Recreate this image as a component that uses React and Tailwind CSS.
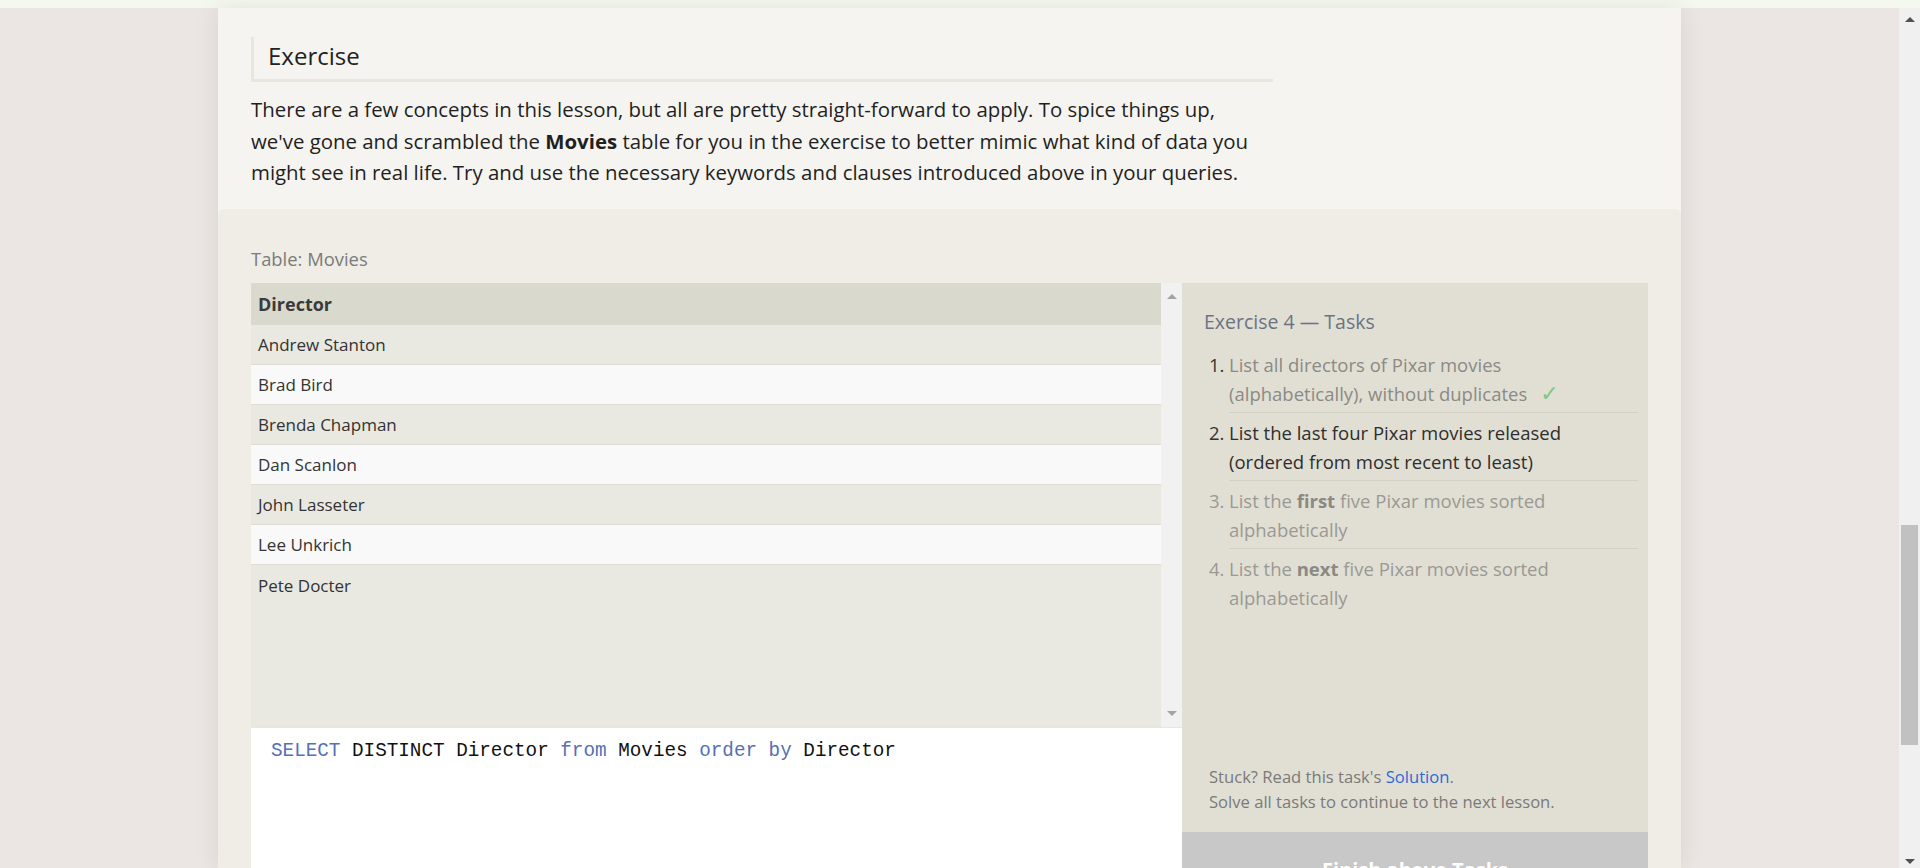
import React from 'react';

const directors = [
  'Andrew Stanton',
  'Brad Bird',
  'Brenda Chapman',
  'Dan Scanlon',
  'John Lasseter',
  'Lee Unkrich',
  'Pete Docter',
];

const UpArrow = ({ color }) => (
  <div className={`w-0 h-0 border-l-[5px] border-r-[5px] border-b-[5px] border-l-transparent border-r-transparent ${color}`} />
);

const DownArrow = ({ color }) => (
  <div className={`w-0 h-0 border-l-[5px] border-r-[5px] border-t-[5px] border-l-transparent border-r-transparent ${color}`} />
);

const TaskList = () => (
  <ol className="mt-[15px] pl-[27px] pr-[10px] text-[18.5px] leading-[28.5px] whitespace-nowrap">
    <li className="flex">
      <span className="w-[20px] shrink-0 text-[#333]">1.</span>
      <div className="flex-1 pb-[4px] border-b border-[#d3d1c6] text-[#8b8a84]">
        List all directors of Pixar movies
        <br />
        (alphabetically), without duplicates
        <span className="ml-[13px] text-[#7fc583] font-['DejaVu_Sans',sans-serif] text-[22px] leading-[20px]">✓</span>
      </div>
    </li>
    <li className="flex mt-[6px]">
      <span className="w-[20px] shrink-0 text-[#333]">2.</span>
      <div className="flex-1 pb-[4px] border-b border-[#d3d1c6] text-[#2e2e2e]">
        List the last four Pixar movies released
        <br />
        (ordered from most recent to least)
      </div>
    </li>
    <li className="flex mt-[6px] text-[#9a9993]">
      <span className="w-[20px] shrink-0">3.</span>
      <div className="flex-1 pb-[4px] border-b border-[#d3d1c6]">
        List the <b className="text-[#8a8984]">first</b> five Pixar movies sorted
        <br />
        alphabetically
      </div>
    </li>
    <li className="flex mt-[6px] text-[#9a9993]">
      <span className="w-[20px] shrink-0">4.</span>
      <div className="flex-1 pb-[4px]">
        List the <b className="text-[#8a8984]">next</b> five Pixar movies sorted
        <br />
        alphabetically
      </div>
    </li>
  </ol>
);

export default function App() {
  return (
    <div className="h-[868px] w-full overflow-hidden flex flex-col bg-[#ebe6e3] font-['Open_Sans',sans-serif]">
      <div className="h-2 shrink-0 bg-[#f5f8ef]" />
      <div className="flex flex-1 min-h-0">
        <div className="flex-1 min-w-0 flex justify-center">
          <div className="w-[1463px] shrink-0 bg-[#f5f4f0] shadow-[0_0_22px_rgba(60,40,30,0.10)]">
            {/* lesson text */}
            <div className="px-[33px] pt-[29px] pb-[20px]">
              <div className="w-[1022px] h-[45px] border-l-[3px] border-b-[3px] border-[#e8e7de] pl-[14px] pt-[4px]">
                <h2 className="text-[24px] leading-[29px] text-[#222]">Exercise</h2>
              </div>
              <p className="mt-[12px] w-[1040px] text-[20.4px] leading-[31.5px] text-[#1f1f1f] whitespace-nowrap">
                There are a few concepts in this lesson, but all are pretty straight-forward to apply. To spice things up,
                <br />
                we've gone and scrambled the <b>Movies</b> table for you in the exercise to better mimic what kind of data you
                <br />
                might see in real life. Try and use the necessary keywords and clauses introduced above in your queries.
              </p>
            </div>

            {/* exercise area */}
            <div className="rounded-t-[6px] bg-[#efede5] px-[33px] pt-[36px] pb-[40px]">
              <div className="text-[18.4px] leading-[27px] text-[#7b7b7b]">Table: Movies</div>
              <div className="mt-[11px] flex">
                <div className="flex-1 flex flex-col">
                  <div className="h-[444px] flex bg-[#e9e8e1]">
                    <div className="flex-1">
                      <div className="h-[42px] flex items-center pl-[7px] pt-[2px] bg-[#d9d9ce] text-[18px] font-bold text-[#3a3a3a]">
                        Director
                      </div>
                      {directors.map((name, i) => (
                        <div
                          key={name}
                          className={`h-[40px] flex items-center pl-[7px] pt-[2px] text-[17px] text-[#333] ${
                            i % 2 === 0 ? 'bg-[#e9e8e1]' : 'bg-[#f9f9f9]'
                          } ${i < directors.length - 1 ? 'border-b border-[#dddcd5]' : ''}`}
                        >
                          {name}
                        </div>
                      ))}
                    </div>
                    <div className="w-[21px] bg-[#f1f1f1] flex flex-col items-center justify-between py-[11px]">
                      <UpArrow color="border-b-[#a3a3a3]" />
                      <DownArrow color="border-t-[#a3a3a3]" />
                    </div>
                  </div>
                  <div className="h-[220px] bg-white border-t border-[#e6e6e6] pl-[20px] pt-[11px] font-['Liberation_Mono',monospace] text-[19.3px] leading-[24px] text-[#111]">
                    <span className="text-[#5570b5]">SELECT</span> DISTINCT Director{' '}
                    <span className="text-[#5570b5]">from</span> Movies{' '}
                    <span className="text-[#5570b5]">order by</span> Director
                  </div>
                </div>

                <div className="w-[466px] shrink-0 h-[664px] bg-[#e1dfd4] flex flex-col">
                  <div className="pl-[22px] pt-[25px] text-[19.5px] leading-[28.5px] text-[#6b7383]">
                    Exercise 4 — Tasks
                  </div>
                  <TaskList />
                  <div className="flex-1" />
                  <div className="px-[27px] pb-[18px] text-[16.6px] leading-[25px] text-[#7a7a78]">
                    Stuck? Read this task's <span className="text-[#2a6bd6]">Solution</span>.
                    <br />
                    Solve all tasks to continue to the next lesson.
                  </div>
                  <div className="h-[115px] shrink-0 bg-[#c8c8c8] pt-[23px] text-center text-[20px] leading-[30px] font-bold text-white">
                    Finish above Tasks
                  </div>
                </div>
              </div>
            </div>
          </div>
        </div>

        {/* page scrollbar */}
        <div className="w-[21px] shrink-0 bg-[#f0f0f0] flex flex-col items-center pt-[9px] pb-[4px]">
          <UpArrow color="border-b-[#505050]" />
          <div className="mt-[503px] w-[17px] h-[220px] bg-[#c1c1c1]" />
          <div className="flex-1" />
          <DownArrow color="border-t-[#505050]" />
        </div>
      </div>
    </div>
  );
}
